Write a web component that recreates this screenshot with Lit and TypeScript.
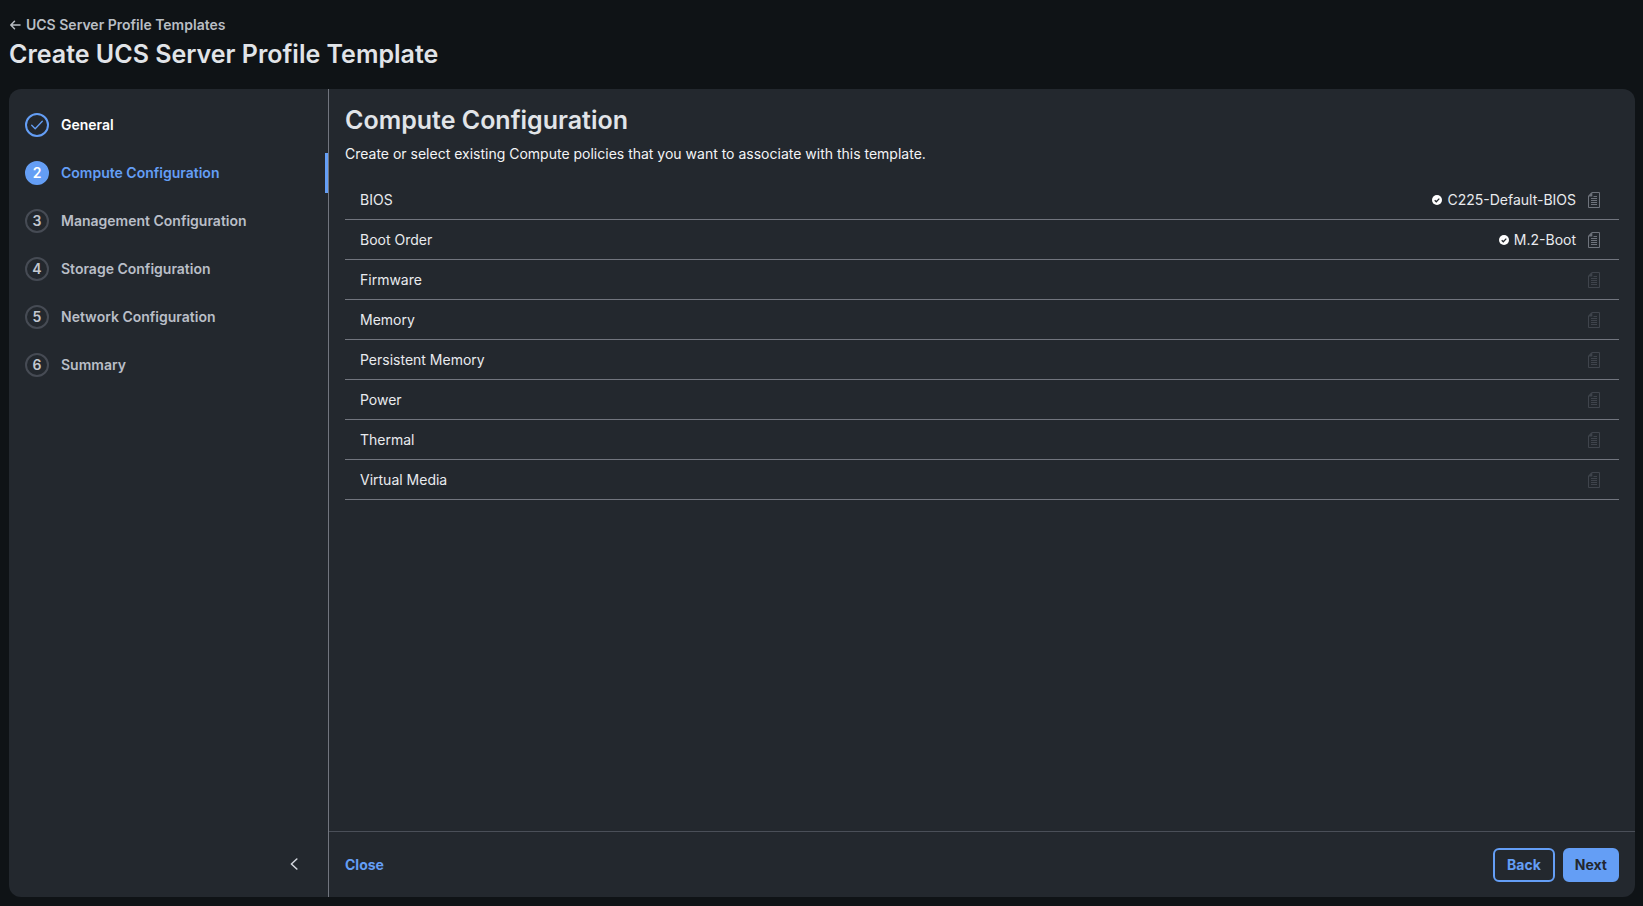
import { LitElement, html, css } from "lit";
import { customElement, property, state } from "lit/decorators.js";
import { classMap } from "lit/directives/class-map.js";

interface Policy {
  name: string;
  value?: string;
}

const STEPS = [
  "General",
  "Compute Configuration",
  "Management Configuration",
  "Storage Configuration",
  "Network Configuration",
  "Summary",
];

const POLICIES: Policy[] = [
  { name: "BIOS", value: "C225-Default-BIOS" },
  { name: "Boot Order", value: "M.2-Boot" },
  { name: "Firmware" },
  { name: "Memory" },
  { name: "Persistent Memory" },
  { name: "Power" },
  { name: "Thermal" },
  { name: "Virtual Media" },
];

const arrowLeft = html`<svg width="12" height="12" viewBox="0 0 12 12" fill="none" stroke="currentColor" stroke-width="1.5" stroke-linecap="round" stroke-linejoin="round" aria-hidden="true">
  <path d="M11 6H2M5.5 2.2 1.8 6l3.7 3.8" />
</svg>`;

const tick = html`<svg width="14" height="12" viewBox="0 0 14 12" fill="none" stroke="currentColor" stroke-width="1.3" stroke-linecap="round" stroke-linejoin="round" aria-hidden="true">
  <path d="M1.7 6.2 5.2 9.8 12.3 2.2" />
</svg>`;

const chevronLeft = html`<svg width="8" height="12" viewBox="0 0 8 12" fill="none" stroke="currentColor" stroke-width="1.6" stroke-linecap="round" stroke-linejoin="round" aria-hidden="true">
  <path d="M6.8 1 1.4 6l5.4 5" />
</svg>`;

const checkBadge = html`<svg width="10" height="10" viewBox="0 0 10 10" aria-hidden="true">
  <circle cx="5" cy="5" r="5" fill="#ffffff" />
  <path d="M2.7 5.2 4.3 6.8 7.3 3.6" fill="none" stroke="#23282e" stroke-width="1.3" />
</svg>`;

const documentIcon = html`<svg width="12" height="16" viewBox="0 0 12 16" fill="none" stroke="currentColor" aria-hidden="true">
  <path d="M3.8.5h7.7v15H.5V4z" />
  <path d="M4.3.5V4.5H.5V4L3.8.5z" fill="currentColor" stroke="none" />
  <path d="M5.5 4.5H9M3 6.5h6M3 8.5h6M3 10.5h6M3 12.5h6" />
</svg>`;

@customElement("wizard-steps")
export class WizardSteps extends LitElement {
  @property({ type: Number }) current = 1;

  static styles = css`
    :host { display: flex; flex-direction: column; justify-content: space-between; }
    .steps { list-style: none; margin: 0; padding: 16px 0 0; display: flex; flex-direction: column; gap: 8px; }
    .step {
      display: flex; align-items: center; gap: 12px; height: 40px; padding-left: 16px;
      border-right: 3px solid transparent; color: #b9bec7; text-decoration: none;
      font-size: 14px; line-height: 20px; font-weight: 600;
    }
    .marker {
      box-sizing: border-box; width: 24px; height: 24px; flex: none; border-radius: 50%;
      border: 2px solid #464b54; display: flex; align-items: center; justify-content: center; color: #c3c8d0;
    }
    .done { color: #ffffff; }
    .done .marker { border-color: #649ef5; color: #649ef5; }
    .active { color: #649ef5; border-right-color: #649ef5; }
    .active .marker { background: #649ef5; border-color: #649ef5; color: #ffffff; }
    .collapse {
      align-self: flex-end; margin: 0 24px 24px 0; width: 20px; height: 18px; padding: 0;
      border: 0; background: none; color: #d0d4db; display: flex; align-items: center; justify-content: center;
    }
  `;

  render() {
    return html`
      <ol class="steps">
        ${STEPS.map((label, i) => html`<li>
          <a href="#" class=${classMap({ step: true, done: i < this.current, active: i === this.current })}>
            <span class="marker">${i < this.current ? tick : i + 1}</span>
            <span>${label}</span>
          </a>
        </li>`)}
      </ol>
      <button class="collapse" type="button" aria-label="Collapse steps">${chevronLeft}</button>
    `;
  }
}

@customElement("policy-list")
export class PolicyList extends LitElement {
  static styles = css`
    :host { display: block; }
    .list { list-style: none; margin: 0; padding: 0; }
    .row {
      box-sizing: border-box; height: 40px; padding: 0 19px 0 15px; border-bottom: 1px solid #71757e;
      display: flex; align-items: center; gap: 12px; font-size: 14px; line-height: 20px; color: #e9ebee;
    }
    .name { flex: 1; }
    .value { display: flex; align-items: center; gap: 5px; }
    .pick { display: flex; padding: 0; border: 0; background: none; color: #6e737c; }
    .faint { color: #3f444c; }
  `;

  render() {
    return html`<ul class="list">
      ${POLICIES.map((p) => html`<li class="row">
        <span class="name">${p.name}</span>
        ${p.value ? html`<span class="value">${checkBadge}<span>${p.value}</span></span>` : ""}
        <button class=${classMap({ pick: true, faint: !p.value })} type="button" aria-label="Select ${p.name} policy">${documentIcon}</button>
      </li>`)}
    </ul>`;
  }
}

@customElement("app-root")
export class AppRoot extends LitElement {
  @state() private step = 1;

  static styles = css`
    :host {
      box-sizing: border-box; display: flex; flex-direction: column; min-height: 100vh; padding: 15px 8px 9px 9px;
      background: #0f1316; color: #e1e4e8; font-family: Inter, sans-serif; font-size: 14px; line-height: 20px;
    }
    .header { margin-bottom: 16px; }
    .crumb { display: flex; width: fit-content; align-items: center; gap: 5px; color: #b9bec4; font-weight: 600; text-decoration: none; }
    h1, h2 { margin: 0; font-size: 25px; line-height: 38px; font-weight: 600; color: #e1e4e8; }
    .panel { flex: 1; display: grid; grid-template-columns: 320px 1fr; border-radius: 12px; background: #23282e; overflow: hidden; }
    .side { border-right: 1px solid #71757e; }
    .main { display: flex; flex-direction: column; min-width: 0; }
    .content { flex: 1; padding: 12px 16px; }
    .intro { margin: 5px 0 16px; color: #f3f4f6; }
    .footer { display: flex; align-items: center; gap: 8px; padding: 16px 16px 15px; border-top: 1px solid #4a4f58; }
    .btn {
      box-sizing: border-box; height: 34px; padding: 0 12px; border: 2px solid #649ef5; border-radius: 6px; background: none;
      color: #649ef5; font: 700 14px/20px Inter, sans-serif;
    }
    .primary { background: #649ef5; color: #23282e; padding: 0 10px; }
    .plain { border: 0; padding: 0; margin-right: auto; }
  `;

  render() {
    return html`
      <header class="header">
        <a class="crumb" href="#">${arrowLeft}<span>UCS Server Profile Templates</span></a>
        <h1>Create UCS Server Profile Template</h1>
      </header>
      <div class="panel">
        <wizard-steps class="side" .current=${this.step}></wizard-steps>
        <main class="main">
          <section class="content">
            <h2>Compute Configuration</h2>
            <p class="intro">Create or select existing Compute policies that you want to associate with this template.</p>
            <policy-list></policy-list>
          </section>
          <footer class="footer">
            <button class="btn plain" type="button">Close</button>
            <button class="btn" type="button">Back</button>
            <button class="btn primary" type="button">Next</button>
          </footer>
        </main>
      </div>
    `;
  }
}
